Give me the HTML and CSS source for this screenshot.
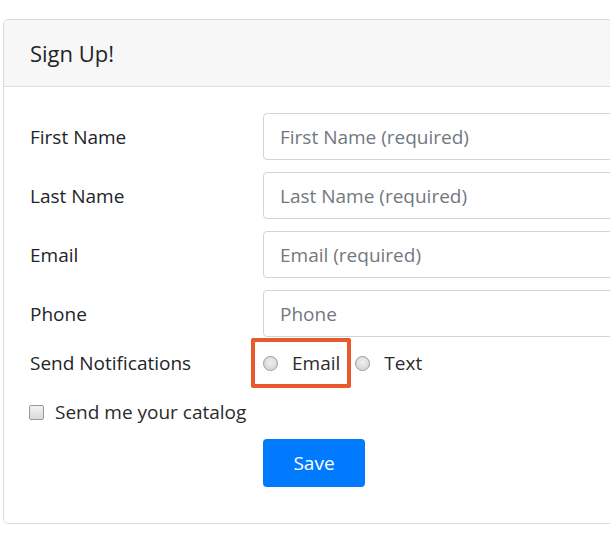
FILE: index.html
```html
<!DOCTYPE html>
<html lang="en">
<head>
<meta charset="utf-8">
<title>Sign Up</title>
<link rel="stylesheet" href="styles.css">
</head>
<body>
<div class="page">
  <div class="card">
    <div class="card-header">Sign Up!</div>
    <form class="card-body">
      <div class="row">
        <label class="label" for="fn">First Name</label>
        <input class="input" id="fn" type="text" placeholder="First Name (required)">
      </div>
      <div class="row">
        <label class="label" for="ln">Last Name</label>
        <input class="input" id="ln" type="text" placeholder="Last Name (required)">
      </div>
      <div class="row">
        <label class="label" for="em">Email</label>
        <input class="input" id="em" type="email" placeholder="Email (required)">
      </div>
      <div class="row">
        <label class="label" for="ph">Phone</label>
        <input class="input" id="ph" type="tel" placeholder="Phone">
      </div>
      <div class="row radio-row">
        <span class="label">Send Notifications</span>
        <div class="options">
          <label class="option highlight"><input class="radio" type="radio" name="notify"><span>Email</span></label>
          <label class="option"><input class="radio" type="radio" name="notify"><span>Text</span></label>
        </div>
      </div>
      <div class="check-row">
        <label class="option"><input class="checkbox" type="checkbox"><span>Send me your catalog</span></label>
      </div>
      <div class="row button-row">
        <span></span>
        <div><button class="btn" type="button">Save</button></div>
      </div>
    </form>
  </div>
</div>
</body>
</html>
```

FILE: styles.css
```css
html, body {
  margin: 0;
  padding: 0;
  background: #ffffff;
  overflow: hidden;
}
body {
  font-family: "Open Sans", "Noto Sans", sans-serif;
  color: #212529;
}
.page {
  padding: 19px 0 0 3px;
  width: 760px;
}
.card {
  width: 720px;
  border: 1px solid #dcdcdc;
  border-radius: 5px;
  background: #fff;
}
.card-header {
  background: #f7f7f7;
  border-bottom: 1px solid #dcdcdc;
  border-radius: 5px 5px 0 0;
  height: 67px;
  box-sizing: border-box;
  padding: 0 0 0 26px;
  display: flex;
  align-items: center;
  font-size: 22px;
  color: #212529;
}
.card-body {
  padding: 26px 0 36px 26px;
  display: flex;
  flex-direction: column;
}
.row {
  display: grid;
  grid-template-columns: 233px 1fr;
  align-items: center;
  margin-bottom: 12px;
}
.label {
  font-size: 19px;
  color: #212529;
}
.input {
  height: 47px;
  box-sizing: border-box;
  border: 1px solid #ced4da;
  border-radius: 4px;
  padding: 0 16px;
  font-family: inherit;
  font-size: 19px;
  color: #495057;
  width: 100%;
}
.input::placeholder {
  color: #72787e;
}
.radio-row {
  height: 28px;
  margin-top: 0;
  margin-bottom: 21px;
}
.options {
  display: flex;
  align-items: center;
  gap: 15px;
}
.option {
  display: inline-flex;
  align-items: center;
  font-size: 19px;
  color: #2b2b2b;
  position: relative;
}
.radio {
  appearance: none;
  -webkit-appearance: none;
  margin: 0 14px 0 0;
  width: 15px;
  height: 15px;
  border-radius: 50%;
  border: 1px solid #9a9a9a;
  background: radial-gradient(circle at 50% 40%, #efefef 0%, #dcdcdc 60%, #cfcfcf 100%);
  box-sizing: border-box;
}
.highlight::after {
  content: "";
  position: absolute;
  left: -12px;
  right: -11px;
  top: -12px;
  bottom: -12px;
  border: 4px solid #e85a2b;
  border-radius: 2px;
  pointer-events: none;
}
.check-row {
  height: 28px;
  display: flex;
  align-items: center;
  margin-bottom: 13px;
  margin-left: -1px;
}
.checkbox {
  appearance: none;
  -webkit-appearance: none;
  margin: 0 11px 0 0;
  width: 15px;
  height: 15px;
  border-radius: 2px;
  border: 1px solid #9a9a9a;
  background: linear-gradient(#f2f2f2, #dadada);
  box-sizing: border-box;
}
.button-row {
  margin-bottom: 0;
}
.btn {
  width: 102px;
  height: 48px;
  border: none;
  border-radius: 4px;
  background: #007bff;
  color: #ffffff;
  font-family: inherit;
  font-size: 19px;
  padding: 0;
}
```
